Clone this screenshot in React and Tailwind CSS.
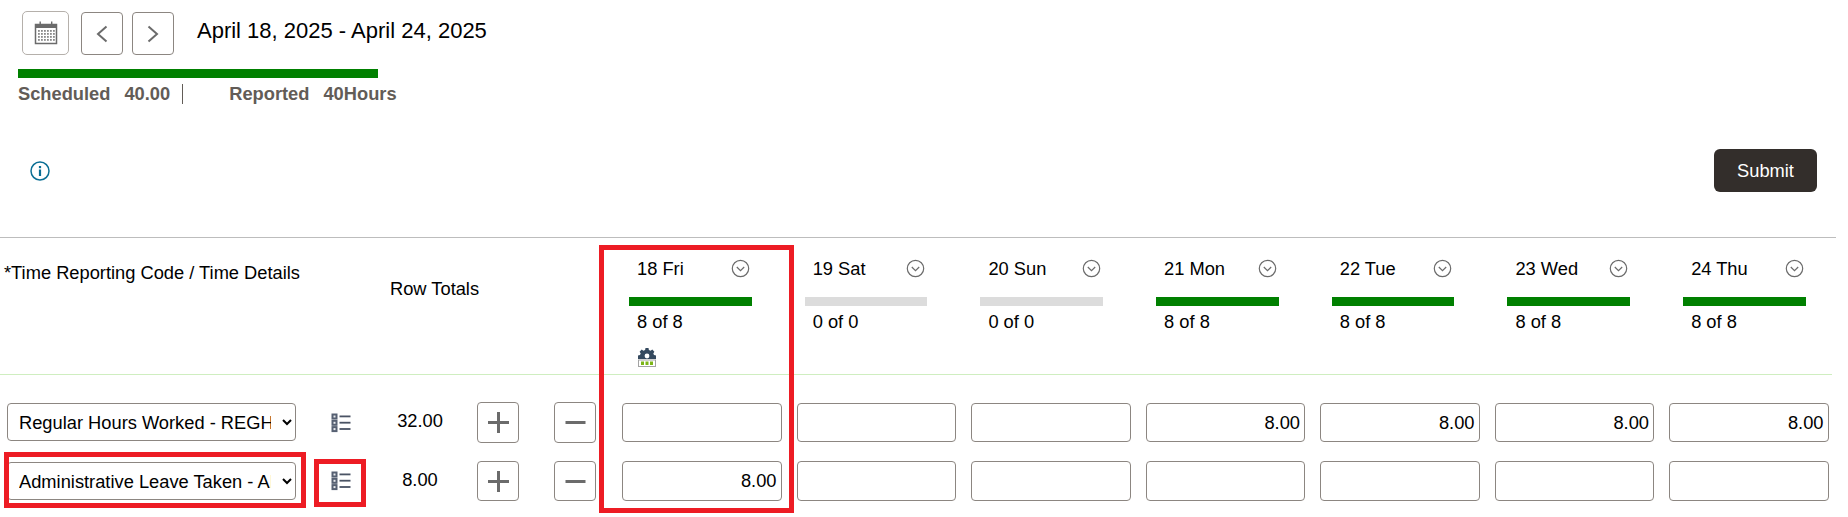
import React from "react";

const days = [
  { label: "18 Fri", total: "8 of 8", on: true, gear: true, a: "", b: "8.00" },
  { label: "19 Sat", total: "0 of 0", on: false, a: "", b: "" },
  { label: "20 Sun", total: "0 of 0", on: false, a: "", b: "" },
  { label: "21 Mon", total: "8 of 8", on: true, a: "8.00", b: "" },
  { label: "22 Tue", total: "8 of 8", on: true, a: "8.00", b: "" },
  { label: "23 Wed", total: "8 of 8", on: true, a: "8.00", b: "" },
  { label: "24 Thu", total: "8 of 8", on: true, a: "8.00", b: "" },
];

function CalendarIcon() {
  return (
    <svg width="24" height="24" viewBox="0 0 24 24" fill="none">
      <rect x="1.5" y="3.5" width="21" height="19" fill="#fff" stroke="#6b6b6b" strokeWidth="1.5" />
      <rect x="1" y="3" width="22" height="4" fill="#6b6b6b" />
      <rect x="5.5" y="0.5" width="1.4" height="4.5" fill="#6b6b6b" />
      <rect x="17" y="0.5" width="1.4" height="4.5" fill="#6b6b6b" />
      {[9, 12, 15, 18].map((y) =>
        [4, 7, 10, 13, 16, 19].map((x) => <rect key={`${x}-${y}`} x={x} y={y} width="1.8" height="1.8" fill="#8a8a8a" />)
      )}
    </svg>
  );
}

function Chev({ dir }) {
  return (
    <svg width="16" height="20" viewBox="0 0 16 20" fill="none" stroke="#6b6b6b" strokeWidth="2">
      <path d={dir === "left" ? "M12.5 2.5 L4 10 L12.5 17.5" : "M3.5 2.5 L12 10 L3.5 17.5"} />
    </svg>
  );
}

function InfoIcon() {
  return (
    <svg width="20" height="20" viewBox="0 0 20 20" fill="none">
      <circle cx="10" cy="10" r="9" stroke="#0a6e94" strokeWidth="1.5" />
      <rect x="8.9" y="8.5" width="2.2" height="6.5" fill="#0a6e94" />
      <rect x="8.9" y="5" width="2.2" height="2.2" fill="#0a6e94" />
    </svg>
  );
}

function CircleChev() {
  return (
    <svg width="19" height="19" viewBox="0 0 19 19" fill="none" stroke="#6b6b6b">
      <circle cx="9.5" cy="9.5" r="8.2" strokeWidth="1.2" />
      <path d="M5.8 8 L9.5 11.6 L13.2 8" strokeWidth="1.2" />
    </svg>
  );
}

function ListIcon() {
  return (
    <svg width="20" height="20" viewBox="0 0 20 20" fill="none">
      {[0.5, 6.8, 13.1].map((y) => (
        <g key={y}>
          <rect x="0.5" y={y} width="6" height="6" fill="#566072" />
          <rect x="2.5" y={y + 2} width="2" height="2" fill="#e8eaee" />
          <rect x="8.5" y={y + 2} width="11" height="1.8" fill="#4a5364" />
        </g>
      ))}
    </svg>
  );
}

function GearIcon() {
  return (
    <svg width="18" height="19" viewBox="0 0 18 19" fill="none">
      <path
        d="M7.5 0h3l.4 2 1.7.7L14.3 1.6l2.1 2.1-1.1 1.7.7 1.7 2 .4V11H0V7.5l2-.4.7-1.7-1.1-1.7 2.1-2.1 1.7 1.1L7.1 2z"
        fill="#34495e"
      />
      <circle cx="9" cy="8" r="2.4" fill="#fff" />
      <rect x="0.5" y="12" width="17" height="6.5" fill="#fff" stroke="#a3a3a3" />
      <rect x="3" y="13.5" width="3" height="3.5" fill="#7cb518" />
      <rect x="7.5" y="13.5" width="3" height="3.5" fill="#7cb518" />
      <rect x="12" y="13.5" width="3" height="3.5" fill="#7cb518" />
    </svg>
  );
}

function Select({ text }) {
  return (
    <select
      defaultValue={text}
      className="w-[289px] h-[38px] pl-[7px] pr-[8px] border border-[#8c8681] rounded-[4px] bg-white text-[18.3px] text-black"
    >
      <option>{text}</option>
    </select>
  );
}

function IconButton({ children, className }) {
  return (
    <button className={`w-[42px] flex items-center justify-center border border-[#8c8681] rounded-[4px] bg-white ${className}`}>
      {children}
    </button>
  );
}

function Row({ select, total, field, className, btn, input }) {
  return (
    <div className={`flex items-center ${className}`}>
      <div className="ml-[7px] w-[289px] self-start mt-[1px] flex">
        <Select text={select} />
      </div>
      <div className="ml-[35px] w-[20px] flex">
        <ListIcon />
      </div>
      <div className="w-[126px] pl-[12px] text-center text-[18.3px] text-black -mt-[3px]">{total}</div>
      <IconButton className={btn}>
        <svg width="21" height="21" viewBox="0 0 21 21" fill="#6b6b6b">
          <rect x="0" y="9" width="21" height="3" />
          <rect x="9" y="0" width="3" height="21" />
        </svg>
      </IconButton>
      <div className="ml-[35px]">
        <IconButton className={btn}>
          <svg width="21" height="21" viewBox="0 0 21 21" fill="#6b6b6b">
            <rect x="0.5" y="9" width="20" height="3" />
          </svg>
        </IconButton>
      </div>
      <div className="ml-[26px] grid grid-cols-[repeat(7,159.5px)] gap-x-[15px]">
        {days.map((d) => (
          <input
            key={d.label}
            readOnly
            value={d[field]}
            className={`px-[4px] border border-[#8c8681] rounded-[4px] bg-white text-right text-[18.3px] text-black ${input}`}
          />
        ))}
      </div>
    </div>
  );
}

export default function App() {
  return (
    <div className="relative w-[1848px] h-[517px] overflow-hidden bg-white text-black font-['Liberation_Sans',Arial,sans-serif]">
      <div className="flex items-center pl-[22px] pt-[11px]">
        <button className="w-[47px] h-[44px] flex items-center justify-center border border-[#b5b0ab] rounded-[5px]">
          <CalendarIcon />
        </button>
        <div className="ml-[12px] mt-[1px]">
          <IconButton className="h-[43px]"><Chev dir="left" /></IconButton>
        </div>
        <div className="ml-[9px] mt-[1px]">
          <IconButton className="h-[43px]"><Chev dir="right" /></IconButton>
        </div>
        <div className="ml-[23px] -mt-[4px] text-[22px] leading-[28px] text-black">April 18, 2025 - April 24, 2025</div>
      </div>

      <div className="ml-[18px] mt-[14px] w-[360px] h-[9px] bg-[#008000]" />

      <div className="ml-[18px] mt-[6px] flex items-center text-[18.3px] leading-[20px] font-bold text-[#625c57]">
        <span>Scheduled</span>
        <span className="ml-[14px]">40.00</span>
        <span className="ml-[12px] w-px h-[20px] bg-[#625c57]" />
        <span className="ml-[46px]">Reported</span>
        <span className="ml-[14px]">40Hours</span>
      </div>

      <div className="flex items-center justify-between mt-[45px] pl-[30px] pr-[31px]">
        <InfoIcon />
        <button className="w-[103px] h-[43px] rounded-[6px] bg-[#332e2b] text-white text-[18.3px] font-medium">Submit</button>
      </div>

      <div className="mt-[45px] w-[1836px] h-px bg-[#bdbdbd]" />

      <div className="relative flex h-[137px] w-[1832px] border-b border-[#cfeec0]">
        <div className="pl-[4px] pt-[25px] w-[390px] text-[18.3px] leading-[20px]">*Time Reporting Code / Time Details</div>
        <div className="pt-[41px] w-[239px] text-[18.3px] leading-[20px]">Row Totals</div>
        <div className="grid grid-cols-[repeat(7,122.5px)] gap-x-[53.2px]">
          {days.map((d) => (
            <div key={d.label}>
              <div className="flex items-center justify-between pl-[8px] pr-[2px] pt-[12px] h-[49px] text-[18.3px] leading-[20px]">
                <span>{d.label}</span>
                <CircleChev />
              </div>
              <div className={`mt-[10px] h-[9px] ${d.on ? "bg-[#008000]" : "bg-[#dcdcdc]"}`} />
              <div className="mt-[6px] pl-[8px] text-[18.3px] leading-[20px]">{d.total}</div>
              {d.gear && (
                <div className="mt-[16px] pl-[9px]">
                  <GearIcon />
                </div>
              )}
            </div>
          ))}
        </div>
      </div>

      <Row className="mt-[27px] h-[41px]" btn="h-[41px]" input="h-[39px]" select="Regular Hours Worked - REGHR" total="32.00" field="a" />
      <Row className="mt-[18px] h-[40px]" btn="h-[40px]" input="h-[40px]" select="Administrative Leave Taken - ADMIN" total="8.00" field="b" />

      <div className="absolute left-[4px] top-[452px] w-[302px] h-[56px] border-[5px] border-[#ed1c24]" />
      <div className="absolute left-[314px] top-[459px] w-[52px] h-[48px] border-[5px] border-[#ed1c24]" />
      <div className="absolute left-[599px] top-[245px] w-[195px] h-[268px] border-[5px] border-[#ed1c24]" />
    </div>
  );
}
